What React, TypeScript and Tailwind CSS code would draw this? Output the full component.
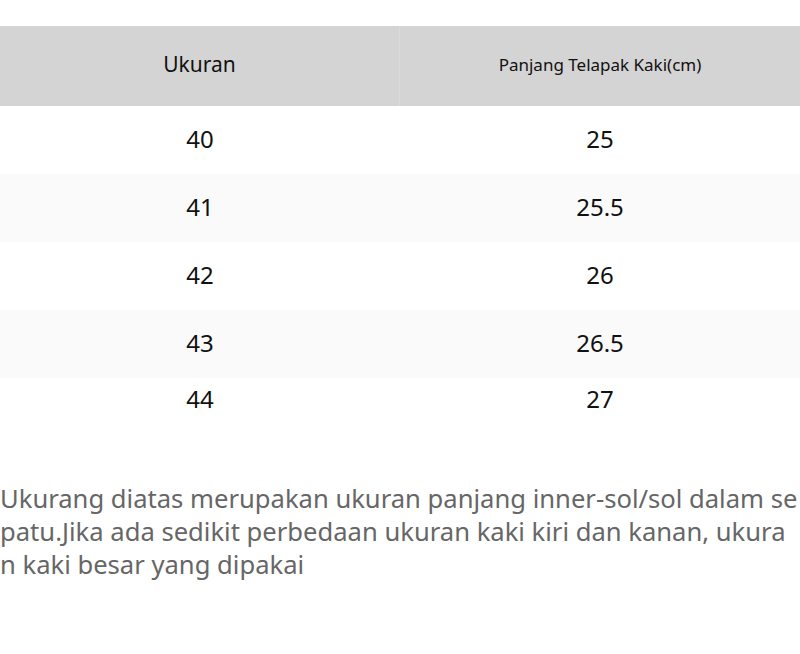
export default function App() {
  const rows: [string, string, boolean][] = [
    ["40", "25", false],
    ["41", "25.5", true],
    ["42", "26", false],
    ["43", "26.5", true],
  ];
  return (
    <div className="w-[800px] h-[654px] bg-white" style={{ fontFamily: '"Noto Sans", sans-serif' }}>
      <div className="h-[26px]" />
      <div className="flex h-[80px] bg-[#d4d4d4]">
        <div className="w-[399px] flex items-center justify-center pb-[2px] text-[21px] text-[#111]">Ukuran</div>
        <div className="w-px bg-[#dadada]" />
        <div className="flex-1 flex items-center justify-center pb-[2px] text-[17px] text-[#111]">Panjang Telapak Kaki(cm)</div>
      </div>
      {rows.map(([a, b, alt]) => (
        <div key={a} className={`flex h-[68px] items-center pb-[3px] text-[24px] text-[#111] ${alt ? "bg-[#fafafa]" : "bg-white"}`}>
          <div className="w-[400px] text-center">{a}</div>
          <div className="flex-1 text-center">{b}</div>
        </div>
      ))}
      <div className="flex h-[42px] items-center text-[24px] text-[#111]">
        <div className="w-[400px] text-center">44</div>
        <div className="flex-1 text-center">27</div>
      </div>
      <div className="h-[62px]" />
      <p className="text-[25.6px] leading-[33px] text-[#666] break-all">
        Ukurang diatas merupakan ukuran panjang inner-sol/sol dalam sepatu.Jika ada sedikit perbedaan ukuran kaki kiri dan kanan, ukuran kaki besar yang dipakai
      </p>
    </div>
  );
}
